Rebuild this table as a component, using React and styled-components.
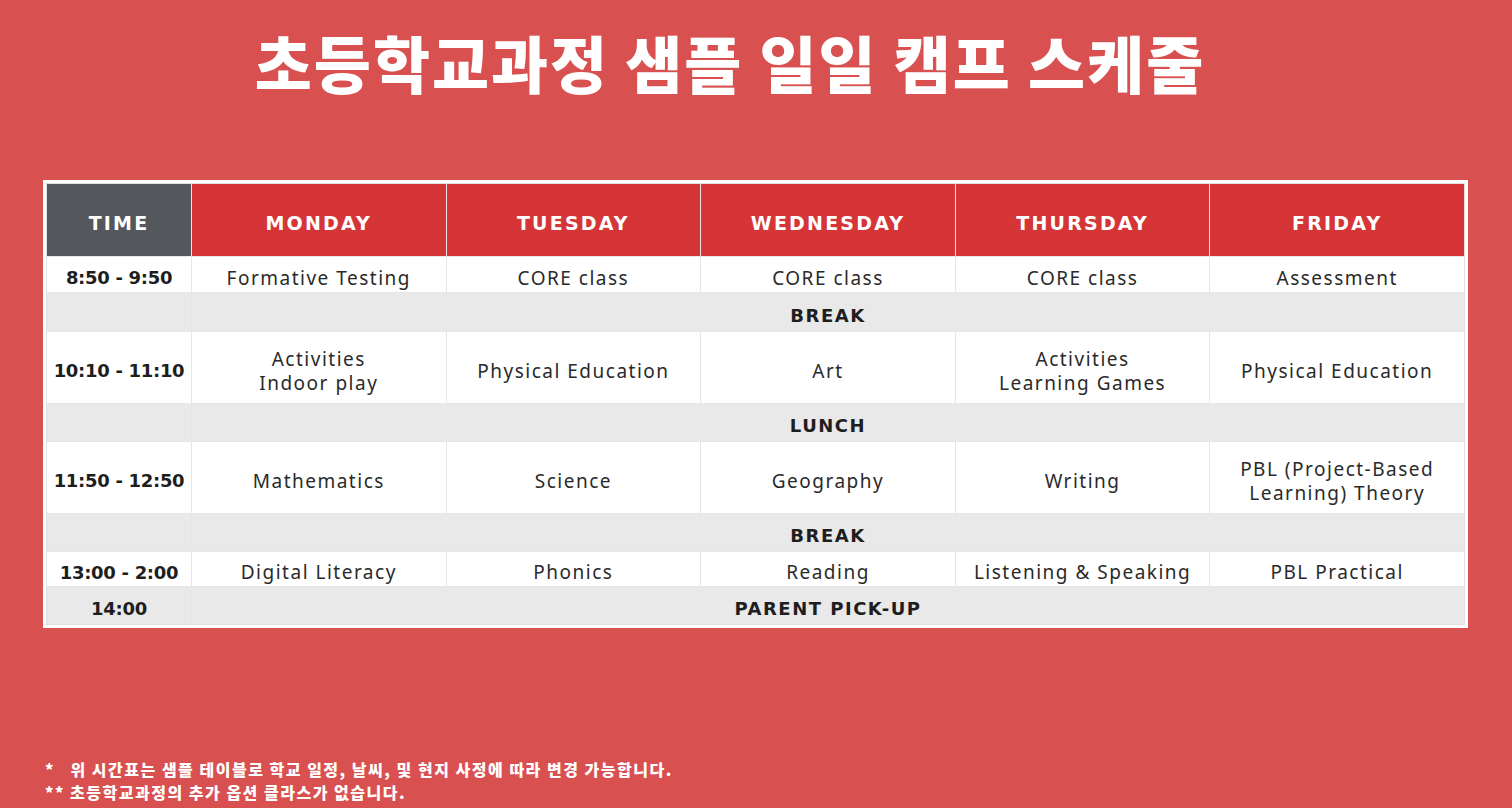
import React from "react";
import styled, { createGlobalStyle } from "styled-components";

const Global = createGlobalStyle`
  html, body { margin: 0; padding: 0; background: #d95050; }
  body { font-family: "Noto Sans", "Open Sans", sans-serif; }
  * { box-sizing: border-box; }
`;

const Page = styled.div`
  height: 808px;
  display: flex;
  flex-direction: column;
  background: #d95050;
  overflow: hidden;
`;

const Title = styled.h1`
  margin: 0;
  padding: 27px 52px 0 0;
  height: 180px;
  text-align: center;
  font-family: "Noto Sans CJK KR", "Noto Sans", sans-serif;
  font-weight: 900;
  font-size: 62px;
  line-height: 70px;
  color: #ffffff;
  letter-spacing: 2px;
`;

const Frame = styled.div`
  margin: 0 44px 0 43px;
  border: 3px solid #ffffff;
  background: #ffffff;
`;

const Table = styled.div`
  display: grid;
  grid-template-columns: 144px repeat(5, 1fr);
  grid-template-rows: 72px 35px 38px 71px 37px 71px 37px 34px 37px;
  gap: 1px;
  background: #e6e6e6;
  border: 1px solid #e0e0e0;
`;

const BaseCell = styled.div`
  display: flex;
  align-items: center;
  justify-content: center;
  text-align: center;
  padding-top: 6px;
`;

const HeadCell = styled(BaseCell)`
  background: ${(p) => (p.$dark ? "#54575b" : "#d63538")};
  color: #ffffff;
  font-family: "DejaVu Sans", "Noto Sans", sans-serif;
  font-weight: 700;
  font-size: 19px;
  letter-spacing: 2.2px;
`;

const TimeCell = styled(BaseCell)`
  background: ${(p) => (p.$band ? "#e9e9e9" : "#ffffff")};
  color: #1e1e1e;
  font-family: "DejaVu Sans", "Noto Sans", sans-serif;
  font-weight: 700;
  font-size: 18px;
  letter-spacing: -0.3px;
`;

const Cell = styled(BaseCell)`
  background: #ffffff;
  color: #2a2a2a;
  font-size: 19px;
  line-height: 24px;
  letter-spacing: 1.5px;
  padding-left: 4px;
  padding-right: 4px;
`;

const BandCell = styled(BaseCell)`
  grid-column: span 5;
  background: #e9e9e9;
  color: #1e1e1e;
  font-family: "DejaVu Sans", "Noto Sans", sans-serif;
  font-weight: 700;
  font-size: 18px;
  letter-spacing: 1.5px;
`;

const Notes = styled.div`
  margin-top: auto;
  padding: 0 0 4px 45px;
  font-family: "Noto Sans CJK KR", "Noto Sans", sans-serif;
  font-weight: 900;
  font-size: 16px;
  line-height: 23px;
  color: #ffffff;
  letter-spacing: 1.5px;
`;

const Note = styled.div`
  white-space: pre;
`;

const days = ["MONDAY", "TUESDAY", "WEDNESDAY", "THURSDAY", "FRIDAY"];

const rows = [
  { time: "8:50 - 9:50", cells: ["Formative Testing", "CORE class", "CORE class", "CORE class", "Assessment"] },
  { label: "BREAK" },
  {
    time: "10:10 - 11:10",
    cells: [
      ["Activities", "Indoor play"],
      "Physical Education",
      "Art",
      ["Activities", "Learning Games"],
      "Physical Education",
    ],
  },
  { label: "LUNCH" },
  {
    time: "11:50 - 12:50",
    cells: ["Mathematics", "Science", "Geography", "Writing", ["PBL (Project-Based", "Learning) Theory"]],
  },
  { label: "BREAK" },
  { time: "13:00 - 2:00", cells: ["Digital Literacy", "Phonics", "Reading", "Listening & Speaking", "PBL Practical"] },
  { time: "14:00", label: "PARENT PICK-UP" },
];

const renderText = (c) =>
  Array.isArray(c) ? (
    <span>
      {c[0]}
      <br />
      {c[1]}
    </span>
  ) : (
    c
  );

export default function App() {
  return (
    <Page>
      <Global />
      <Title>초등학교과정 샘플 일일 캠프 스케줄</Title>
      <Frame>
        <Table>
          <HeadCell $dark>TIME</HeadCell>
          {days.map((d) => (
            <HeadCell key={d}>{d}</HeadCell>
          ))}
          {rows.map((r, i) =>
            r.label ? (
              <React.Fragment key={i}>
                <TimeCell $band>{r.time || ""}</TimeCell>
                <BandCell>{r.label}</BandCell>
              </React.Fragment>
            ) : (
              <React.Fragment key={i}>
                <TimeCell>{r.time}</TimeCell>
                {r.cells.map((c, j) => (
                  <Cell key={j}>{renderText(c)}</Cell>
                ))}
              </React.Fragment>
            )
          )}
        </Table>
      </Frame>
      <Notes>
        <Note>{"*   위 시간표는 샘플 테이블로 학교 일정, 날씨, 및 현지 사정에 따라 변경 가능합니다."}</Note>
        <Note>{"** 초등학교과정의 추가 옵션 클라스가 없습니다."}</Note>
      </Notes>
    </Page>
  );
}
